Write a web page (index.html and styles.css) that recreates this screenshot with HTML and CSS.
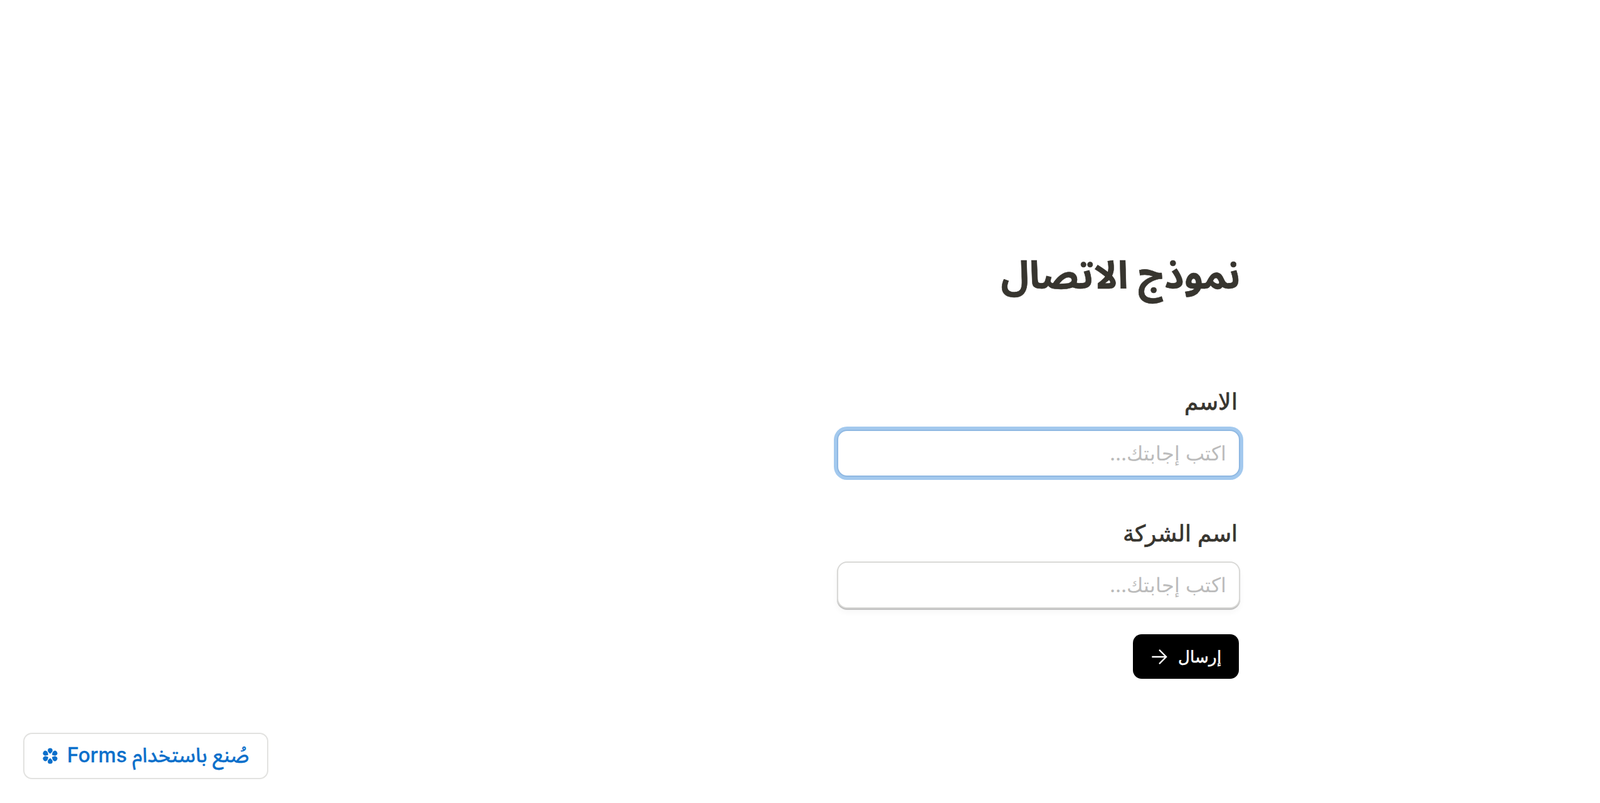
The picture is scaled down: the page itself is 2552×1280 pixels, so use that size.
FILE: index.html
```html
<!DOCTYPE html>
<html lang="ar" dir="rtl">
<head>
    <meta charset="UTF-8">
    <title>نموذج الاتصال</title>
    <link rel="stylesheet" href="styles.css">
</head>
<body>
    <main class="form-page">
        <h1 class="form-title">نموذج الاتصال</h1>
        <form class="contact-form">
            <div class="field">
                <label class="field-label" for="name">الاسم</label>
                <input class="field-input is-focused" type="text" id="name" placeholder="اكتب إجابتك...">
            </div>
            <div class="field">
                <label class="field-label" for="company">اسم الشركة</label>
                <input class="field-input" type="text" id="company" placeholder="اكتب إجابتك...">
            </div>
            <div class="form-actions">
                <button class="submit-button" type="button">
                    <span>إرسال</span>
                    <svg class="submit-arrow" viewBox="0 0 24 24" aria-hidden="true">
                        <path d="M2 12H21.500M12 2.500L21.500 12L12 21.500"/>
                    </svg>
                </button>
            </div>
        </form>
    </main>
    <a class="made-with" href="#">
        <span>صُنع باستخدام Forms</span>
        <svg class="made-with-logo" viewBox="0 0 24 24" aria-hidden="true">
            <path d="M12 9C10.600 7.900 8.700 6.600 8.700 4.500A3.300 3.300 0 0 1 15.300 4.500C15.300 6.600 13.400 7.900 12 9z"/>
            <path transform="rotate(60 12 12)" d="M12 9C10.600 7.900 8.700 6.600 8.700 4.500A3.300 3.300 0 0 1 15.300 4.500C15.300 6.600 13.400 7.900 12 9z"/>
            <path transform="rotate(120 12 12)" d="M12 9C10.600 7.900 8.700 6.600 8.700 4.500A3.300 3.300 0 0 1 15.300 4.500C15.300 6.600 13.400 7.900 12 9z"/>
            <path transform="rotate(180 12 12)" d="M12 9C10.600 7.900 8.700 6.600 8.700 4.500A3.300 3.300 0 0 1 15.300 4.500C15.300 6.600 13.400 7.900 12 9z"/>
            <path transform="rotate(240 12 12)" d="M12 9C10.600 7.900 8.700 6.600 8.700 4.500A3.300 3.300 0 0 1 15.300 4.500C15.300 6.600 13.400 7.900 12 9z"/>
            <path transform="rotate(300 12 12)" d="M12 9C10.600 7.900 8.700 6.600 8.700 4.500A3.300 3.300 0 0 1 15.300 4.500C15.300 6.600 13.400 7.900 12 9z"/>
        </svg>
    </a>
</body>
</html>
```

FILE: styles.css
```css
* {
    box-sizing: border-box;
}

body {
    margin: 0;
    min-height: 1280px;
    background-color: #fff;
    color: #37352f;
    font-family: Inter, "Noto Sans", "Liberation Sans", sans-serif;
}

.form-page {
    width: 643px;
    margin-right: 574px;
    padding-top: 401px;
}

.form-title {
    margin: 0 0 136px;
    font-family: "Noto Sans Arabic", sans-serif;
    font-size: 61px;
    line-height: 80px;
    font-weight: 700;
    -webkit-text-stroke: 0.6px #37352f;
}

.field {
    margin-bottom: 67px;
}

.field-label {
    display: block;
    margin: 0 4px 22px;
    font-size: 36px;
    line-height: 46px;
    font-weight: 500;
    -webkit-text-stroke: 0.7px #37352f;
}

.field-input {
    display: block;
    width: 100%;
    height: 75px;
    padding: 0 20px;
    border: 2px solid #d9d9d7;
    border-radius: 16px;
    box-shadow: 0 2px 1px #bbb, 0 6px 10px rgba(55, 53, 47, 0.04);
    background: #fff;
    font-family: inherit;
    font-size: 31.5px;
    color: #37352f;
    outline: none;
}

.field-input::placeholder {
    color: #bbb;
}

.field-input.is-focused {
    border-color: #8fb8e2;
    box-shadow: 0 0 0 5px #a3c9ee;
}

.form-actions {
    display: flex;
    margin-top: -26px;
    padding-right: 2px;
}

.submit-button {
    display: flex;
    align-items: center;
    gap: 16px;
    height: 71px;
    padding: 0 28px;
    border: none;
    border-radius: 14px;
    background-color: #000;
    color: #fff;
    font-family: inherit;
    font-size: 26px;
    font-weight: 500;
    -webkit-text-stroke: 0.5px #fff;
}

.submit-arrow {
    width: 28px;
    height: 28px;
    fill: none;
    stroke: #fff;
    stroke-width: 2;
}

.made-with {
    position: fixed;
    left: 37px;
    bottom: 38px;
    display: flex;
    align-items: center;
    gap: 13px;
    height: 74px;
    padding: 0 29px 0 27px;
    border: 2px solid #e2e2e0;
    border-radius: 14px;
    background-color: #fff;
    color: #0a6fcb;
    font-family: Inter, "Noto Sans Arabic", sans-serif;
    font-size: 32px;
    font-weight: 500;
    text-decoration: none;
    -webkit-text-stroke: 0.3px #0a6fcb;
}

.made-with-logo {
    width: 28px;
    height: 28px;
    fill: #0a6fcb;
    stroke: none;
}
```
